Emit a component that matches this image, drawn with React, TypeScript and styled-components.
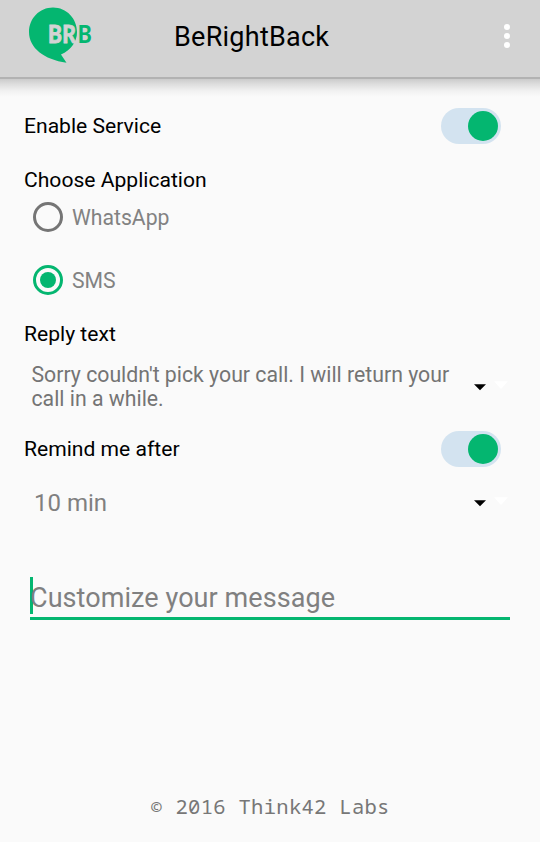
import React from "react";
import styled, { createGlobalStyle } from "styled-components";

const GREEN = "#04b670";

const GlobalStyle = createGlobalStyle`
  * { box-sizing: border-box; }
  html, body { margin: 0; padding: 0; background: #fafafa; }
  body { font-family: Roboto, "Liberation Sans", sans-serif; }
`;

const Screen = styled.div`
  width: 540px;
  height: 842px;
  display: flex;
  flex-direction: column;
  background: #fafafa;
  overflow: hidden;
`;

const AppBar = styled.header`
  flex: none;
  height: 79px;
  display: grid;
  grid-template-columns: 174px 1fr 66px;
  background: #d3d3d3;
  border-bottom: 2px solid #b2b2b2;
`;

const BarShadow = styled.div`
  flex: none;
  height: 18px;
  background: linear-gradient(#cbcbcb, #dedede 30%, #f1f1f1 66%, #fafafa);
`;

const Title = styled.h1`
  margin: 0;
  font-size: 27px;
  font-weight: 400;
  line-height: 74px;
  letter-spacing: 0.25px;
  white-space: nowrap;
`;

const MenuButton = styled.button`
  display: flex;
  flex-direction: column;
  align-items: center;
  gap: 3px;
  padding: 23.5px 0 0;
  border: 0;
  background: none;
`;

const Dot = styled.span`
  width: 6px;
  height: 6px;
  border-radius: 50%;
  background: #fff;
`;

const Content = styled.main`
  flex: 1;
  display: flex;
  flex-direction: column;
  padding: 0 24px;
`;

const SettingRow = styled.div<{ $top: number }>`
  display: flex;
  align-items: center;
  justify-content: space-between;
  height: 37px;
  margin-top: ${(p) => p.$top}px;
  padding-right: 15px;
`;

const Label = styled.span`
  font-size: 21.1px;
  line-height: 26px;
  color: #000;
  white-space: nowrap;
`;

const Section = styled.div<{ $top: number }>`
  display: flex;
  height: 26px;
  margin-top: ${(p) => p.$top}px;
`;

const Track = styled.span`
  display: flex;
  align-items: center;
  justify-content: flex-end;
  width: 60px;
  height: 36px;
  padding-right: 3px;
  border-radius: 18px;
  background: #d3e3f0;
`;

const Knob = styled.span`
  width: 30px;
  height: 30px;
  border-radius: 50%;
  background: ${GREEN};
`;

const RadioGroup = styled.div`
  display: flex;
  flex-direction: column;
  gap: 33px;
  margin-top: 9px;
  padding-left: 9px;
`;

const RadioRow = styled.div`
  display: flex;
  align-items: center;
  gap: 9px;
  height: 30px;
  font-size: 21.2px;
  color: #828282;
`;

const RadioCircle = styled.span<{ $on?: boolean }>`
  display: flex;
  align-items: center;
  justify-content: center;
  width: 30px;
  height: 30px;
  border: 3px solid ${(p) => (p.$on ? GREEN : "#757575")};
  border-radius: 50%;
`;

const RadioFill = styled.span`
  width: 16px;
  height: 16px;
  border-radius: 50%;
  background: ${GREEN};
`;

const SelectRow = styled.div<{ $top: number; $height: number }>`
  display: grid;
  grid-template-columns: 442px 42px;
  align-items: center;
  height: ${(p) => p.$height}px;
  margin-top: ${(p) => p.$top}px;
  padding-left: 8px;
`;

const ReplyText = styled.div`
  margin-left: -0.5px;
  font-size: 21.25px;
  line-height: 24.5px;
  color: #747474;
  white-space: nowrap;
`;

const Duration = styled.div`
  padding-left: 2px;
  font-size: 24px;
  line-height: 30px;
  color: #808080;
`;

const Field = styled.div`
  display: flex;
  align-items: flex-start;
  height: 43px;
  margin: 58.5px 6px 0;
  border-bottom: 3px solid ${GREEN};
`;

const Caret = styled.span`
  width: 3px;
  height: 37px;
  margin-right: -3px;
  background: ${GREEN};
`;

const Placeholder = styled.span`
  font-size: 27px;
  line-height: 42px;
  letter-spacing: 0.07px;
  color: #808080;
  white-space: nowrap;
`;

const Footer = styled.footer`
  flex: none;
  height: 51px;
  font-family: "Noto Sans Mono", "DejaVu Sans Mono", monospace;
  font-size: 20.5px;
  letter-spacing: 0.3px;
  line-height: 30px;
  text-align: center;
  color: #777;
`;

const LogoLetter = styled.text`
  font: 900 25px Lato, "Open Sans", sans-serif;
  paint-order: stroke;
`;

function Logo() {
  return (
    <svg width="110" height="76" viewBox="0 0 110 76" aria-label="BRB">
      <path
        d="M53 7.5C66.5 7.5 77 18.5 77 32C77 42 71 50 61 54.5L66.5 62.8C44 59.5 29 48 29 32C29 18.5 39.5 7.5 53 7.5Z"
        fill={GREEN}
      />
      <LogoLetter transform="translate(48.1 43) scale(.84 1)" fill="#d3d3d3" stroke="#d3d3d3" strokeWidth="0.9">B</LogoLetter>
      <LogoLetter transform="translate(62.3 43) scale(.84 1)" fill="#d3d3d3" stroke="#d3d3d3" strokeWidth="0.9">R</LogoLetter>
      <LogoLetter transform="translate(77.7 43) scale(.84 1)" fill={GREEN} stroke="#d3d3d3" strokeWidth="3">B</LogoLetter>
    </svg>
  );
}

function Toggle() {
  return <Track role="switch" aria-checked="true"><Knob /></Track>;
}

function Arrows() {
  return (
    <svg width="42" height="20" viewBox="0 0 42 20">
      <path d="M0 7.2H12L6 13.2Z" fill="#000" />
      <path d="M20 4.3H34L27 12Z" fill="#fff" />
    </svg>
  );
}

export default function App() {
  return (
    <>
      <GlobalStyle />
      <Screen>
        <AppBar>
          <Logo />
          <Title>BeRightBack</Title>
          <MenuButton aria-label="Menu"><Dot /><Dot /><Dot /></MenuButton>
        </AppBar>
        <BarShadow />
        <Content>
          <SettingRow $top={10}><Label>Enable Service</Label><Toggle /></SettingRow>
          <Section $top={23}><Label>Choose Application</Label></Section>
          <RadioGroup>
            <RadioRow><RadioCircle />WhatsApp</RadioRow>
            <RadioRow><RadioCircle $on><RadioFill /></RadioCircle>SMS</RadioRow>
          </RadioGroup>
          <Section $top={26.4}><Label>Reply text</Label></Section>
          <SelectRow $top={15.6} $height={48}>
            <ReplyText>Sorry couldn't pick your call. I will return your<br />call in a while.</ReplyText>
            <Arrows />
          </SelectRow>
          <SettingRow $top={19.1}><Label>Remind me after</Label><Toggle /></SettingRow>
          <SelectRow $top={21.4} $height={30}>
            <Duration>10 min</Duration>
            <Arrows />
          </SelectRow>
          <Field><Caret /><Placeholder>Customize your message</Placeholder></Field>
        </Content>
        <Footer>© 2016 Think42 Labs</Footer>
      </Screen>
    </>
  );
}
